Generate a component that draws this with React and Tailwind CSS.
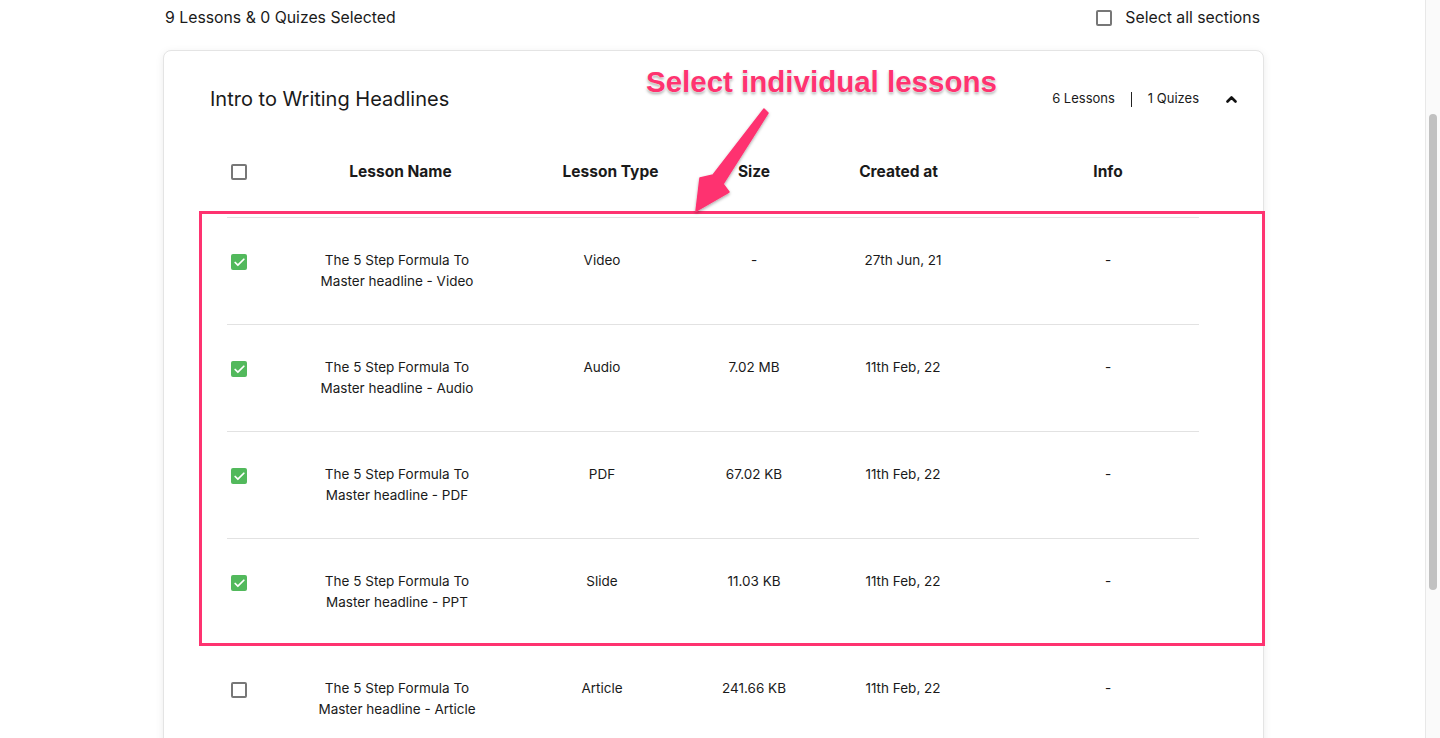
import { Check } from 'lucide-react';

const lessons = [
  { id: 1, name: ['The 5 Step Formula To', 'Master headline - Video'], type: 'Video', size: '-', created: '27th Jun, 21', info: '-', checked: true },
  { id: 2, name: ['The 5 Step Formula To', 'Master headline - Audio'], type: 'Audio', size: '7.02 MB', created: '11th Feb, 22', info: '-', checked: true },
  { id: 3, name: ['The 5 Step Formula To', 'Master headline - PDF'], type: 'PDF', size: '67.02 KB', created: '11th Feb, 22', info: '-', checked: true },
  { id: 4, name: ['The 5 Step Formula To', 'Master headline - PPT'], type: 'Slide', size: '11.03 KB', created: '11th Feb, 22', info: '-', checked: true },
  { id: 5, name: ['The 5 Step Formula To', 'Master headline - Article'], type: 'Article', size: '241.66 KB', created: '11th Feb, 22', info: '-', checked: false },
];

function Box({ checked }) {
  if (checked) {
    return (
      <span className="flex h-[16px] w-[16px] items-center justify-center rounded-[2px] bg-[#52b95c]">
        <Check size={13} strokeWidth={3.2} className="text-white" />
      </span>
    );
  }
  return <span className="block h-[16px] w-[16px] rounded-[2px] border-2 border-[#777]" />;
}

const cols = 'grid grid-cols-[63px_214px_201px_98px_194px_202px]';

export default function App() {
  return (
    <div className="flex h-[738px] overflow-hidden bg-white font-['Inter',sans-serif] text-[#1a1a1a]">
      <div className="relative flex-1">
        <div className="ml-[163px] w-[1101px]">
          {/* top bar */}
          <div className="flex h-[36px] items-center justify-between pl-[2px] pr-[4px]">
            <p className="text-[15.8px]">9 Lessons &amp; 0 Quizes Selected</p>
            <label className="flex items-center gap-[13px] text-[15.8px]">
              <Box checked={false} />
              Select all sections
            </label>
          </div>

          {/* section card */}
          <div className="mt-[14px] rounded-lg border border-[#e4e4e4] bg-white shadow-[0_2px_8px_rgba(0,0,0,0.08)]">
            <div className="flex h-[96px] items-center justify-between pl-[46px] pr-[26px]">
              <h2 className="text-[20px]">Intro to Writing Headlines</h2>
              <div className="flex items-center text-[13px]">
                <span>6 Lessons</span>
                <span className="mx-[16px] h-[15px] w-px bg-[#222]" />
                <span>1 Quizes</span>
                <svg width="11" height="8" viewBox="0 0 11 8" className="ml-[27px]">
                  <polyline points="1.5,6.5 5.5,2.5 9.5,6.5" fill="none" stroke="#111" strokeWidth="2.6" strokeLinecap="round" strokeLinejoin="round" />
                </svg>
              </div>
            </div>

            <div className="pl-[63px] pr-[64px]">
              <div className={`${cols} mb-[20px] h-[50px] items-center text-[15.5px] font-bold`}>
                <div className="pl-[4px]"><Box checked={false} /></div>
                <div className="pl-[7px] text-center">Lesson Name</div>
                <div className="pl-[12px] text-center">Lesson Type</div>
                <div className="text-center">Size</div>
                <div className="pr-[3px] text-center">Created at</div>
                <div className="pl-[20px] text-center">Info</div>
              </div>

              {lessons.map((l) => (
                <div key={l.id} className={`${cols} items-start border-t border-[#e2e2e2] py-[32px] text-[13.5px] leading-[21px]`}>
                  <div className="pl-[4px] pt-[4px]"><Box checked={l.checked} /></div>
                  <div className="text-center">
                    {l.name[0]}
                    <br />
                    {l.name[1]}
                  </div>
                  <div className="pr-[5px] text-center">{l.type}</div>
                  <div className="text-center">{l.size}</div>
                  <div className="pl-[6px] text-center">{l.created}</div>
                  <div className="pl-[20px] text-center">{l.info}</div>
                </div>
              ))}
            </div>
          </div>
        </div>

        {/* annotation overlay */}
        <div className="pointer-events-none absolute left-[199px] top-[211px] h-[435px] w-[1066px] border-[3px] border-[#fe3370]" />
        <p className="pointer-events-none absolute left-[646px] top-[62px] font-['Liberation_Sans',Arial,sans-serif] text-[29.5px] font-bold leading-[40px] text-[#fe3370] [text-shadow:0_0_1px_#fff,0_0_2px_#fff,0_2px_3px_rgba(0,0,0,0.35)]">
          Select individual lessons
        </p>
        <svg className="pointer-events-none absolute left-0 top-0" width="1425" height="738" viewBox="0 0 1425 738">
          <defs>
            <filter id="sh" x="-20%" y="-20%" width="140%" height="140%">
              <feDropShadow dx="0" dy="1.5" stdDeviation="1.5" floodColor="#000" floodOpacity="0.35" />
            </filter>
          </defs>
          <polygon
            points="764,109 768,113 723,184 729,192 696,211 700,178 713,175"
            fill="#fe3370"
            stroke="#fe3370"
            strokeWidth="1.5"
            strokeLinejoin="round"
            filter="url(#sh)"
          />
        </svg>
      </div>

      {/* scrollbar */}
      <div className="w-[15px] shrink-0 border-l border-[#e8e8e8] bg-[#fafafa]">
        <div className="mx-auto mt-[114px] h-[476px] w-[8px] rounded-full bg-[#c1c1c1]" />
      </div>
    </div>
  );
}
